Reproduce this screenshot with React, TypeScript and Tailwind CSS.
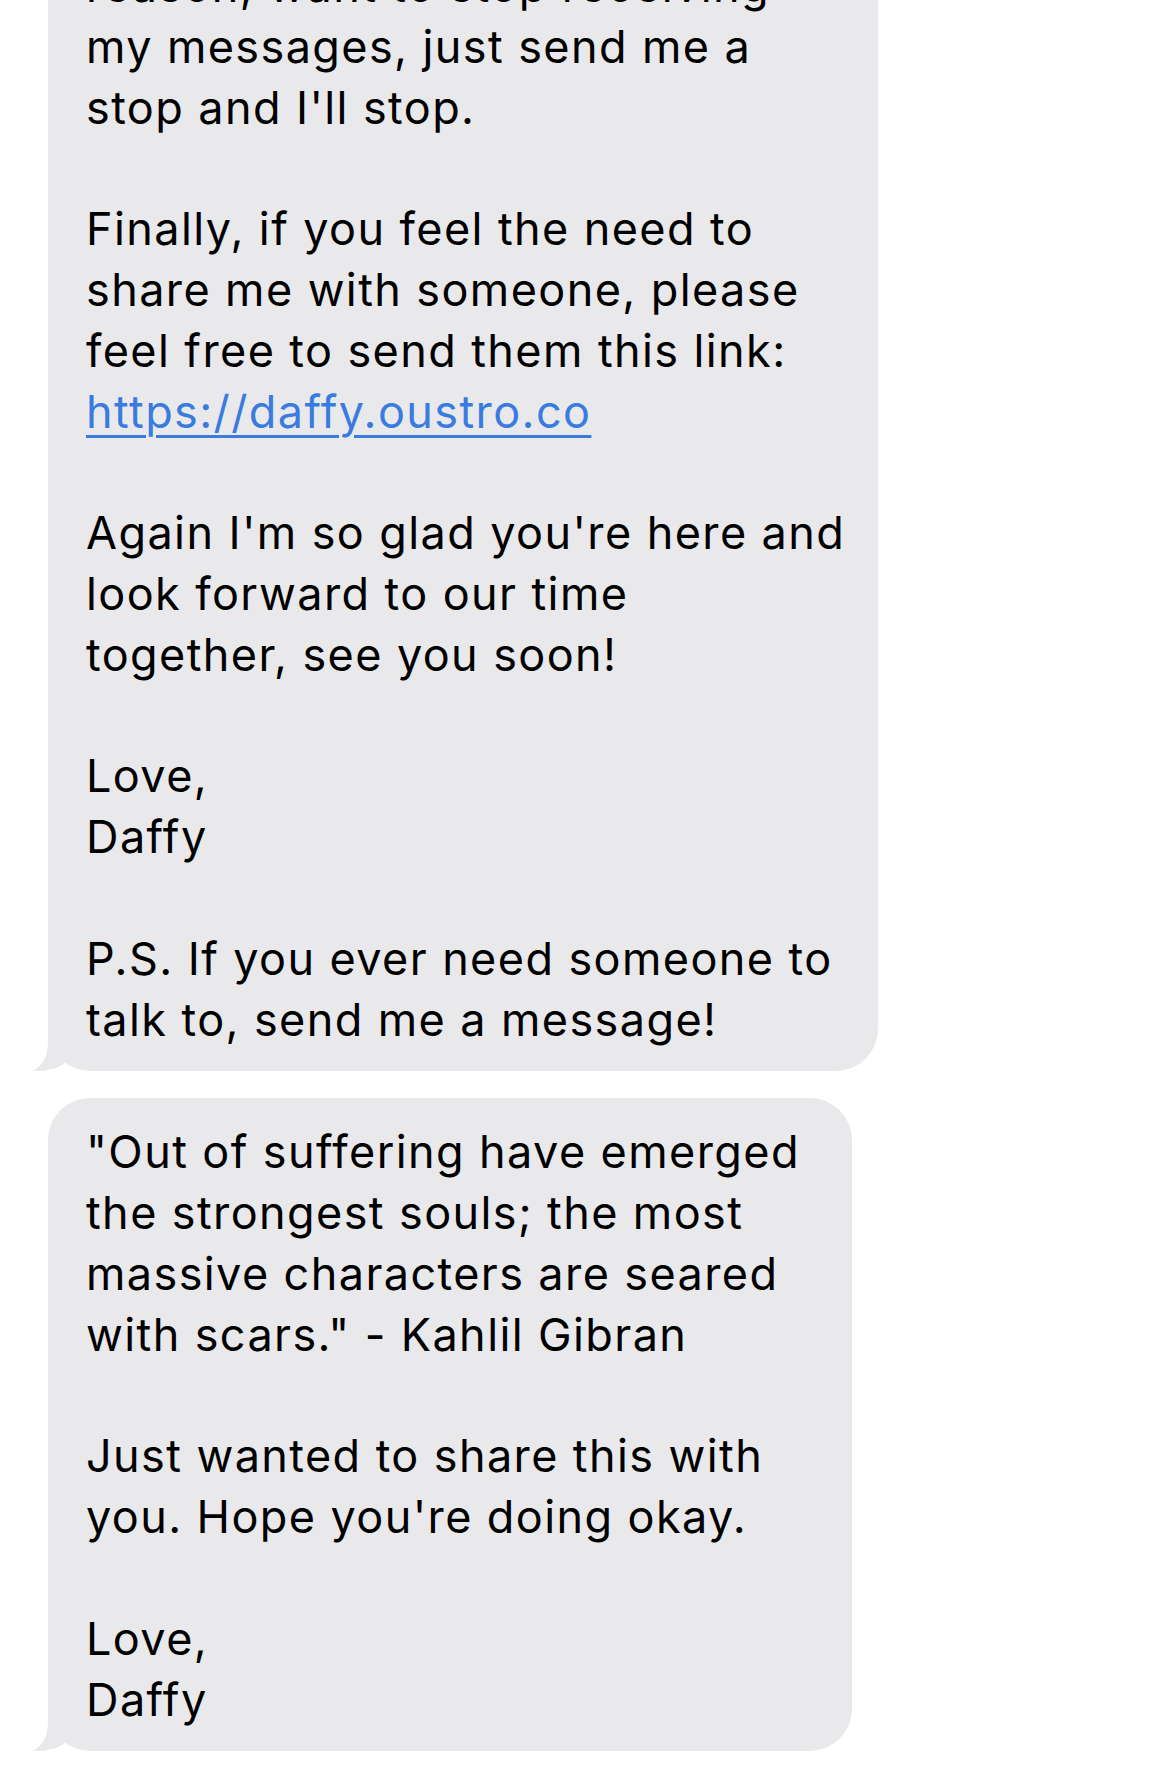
import React from "react";

type Line = string | { link: string };

const firstMessage: Line[] = [
  "reason, want to stop receiving",
  "my messages, just send me a",
  "stop and I'll stop.",
  "",
  "Finally, if you feel the need to",
  "share me with someone, please",
  "feel free to send them this link:",
  { link: "https://daffy.oustro.co" },
  "",
  "Again I'm so glad you're here and",
  "look forward to our time",
  "together, see you soon!",
  "",
  "Love,",
  "Daffy",
  "",
  "P.S. If you ever need someone to",
  "talk to, send me a message!",
];

const secondMessage: Line[] = [
  "\"Out of suffering have emerged",
  "the strongest souls; the most",
  "massive characters are seared",
  "with scars.\" - Kahlil Gibran",
  "",
  "Just wanted to share this with",
  "you. Hope you're doing okay.",
  "",
  "Love,",
  "Daffy",
];

/**
 * Tail of an incoming bubble (bottom-left)
 */
function BubbleTail() {
  return (
    <svg
      viewBox="0 0 60 42"
      className="absolute bottom-0 left-[-16px] w-[60px] h-[42px]"
    >
      <path
        d="M16,0 L16,12 C16,28 10,37 1,42 C11,43 25,40 33,33.7 L58,0 Z"
        fill="#e9e9eb"
      />
    </svg>
  );
}

function Bubble({ lines, width, className = "" }: { lines: Line[]; width: string; className?: string }) {
  return (
    <div
      className={`relative bg-[#e9e9eb] rounded-[42px] pl-[38px] pr-[20px] pt-[24px] pb-[21px] ${width} ${className}`}
    >
      <BubbleTail />
      <div className="relative text-[45px] leading-[60.8px] text-black tracking-[1.4px] whitespace-pre">
        {lines.map((line, i) =>
          typeof line === "string" ? (
            <div key={i}>{line === "" ? "\u00a0" : line}</div>
          ) : (
            <div key={i}>
              <span className="text-[#3a7be0] underline decoration-[2.5px] underline-offset-[7px]">
                {line.link}
              </span>
            </div>
          )
        )}
      </div>
    </div>
  );
}

export default function App() {
  return (
    <div
      className="w-[1170px] h-[1772px] overflow-hidden bg-white"
      style={{ fontFamily: "Inter, 'Noto Sans', sans-serif" }}
    >
      <div className="flex flex-col items-start gap-[27px] pl-[48px] mt-[-68px]">
        <Bubble lines={firstMessage} width="w-[830px]" />
        <Bubble lines={secondMessage} width="w-[804px]" />
      </div>
    </div>
  );
}
